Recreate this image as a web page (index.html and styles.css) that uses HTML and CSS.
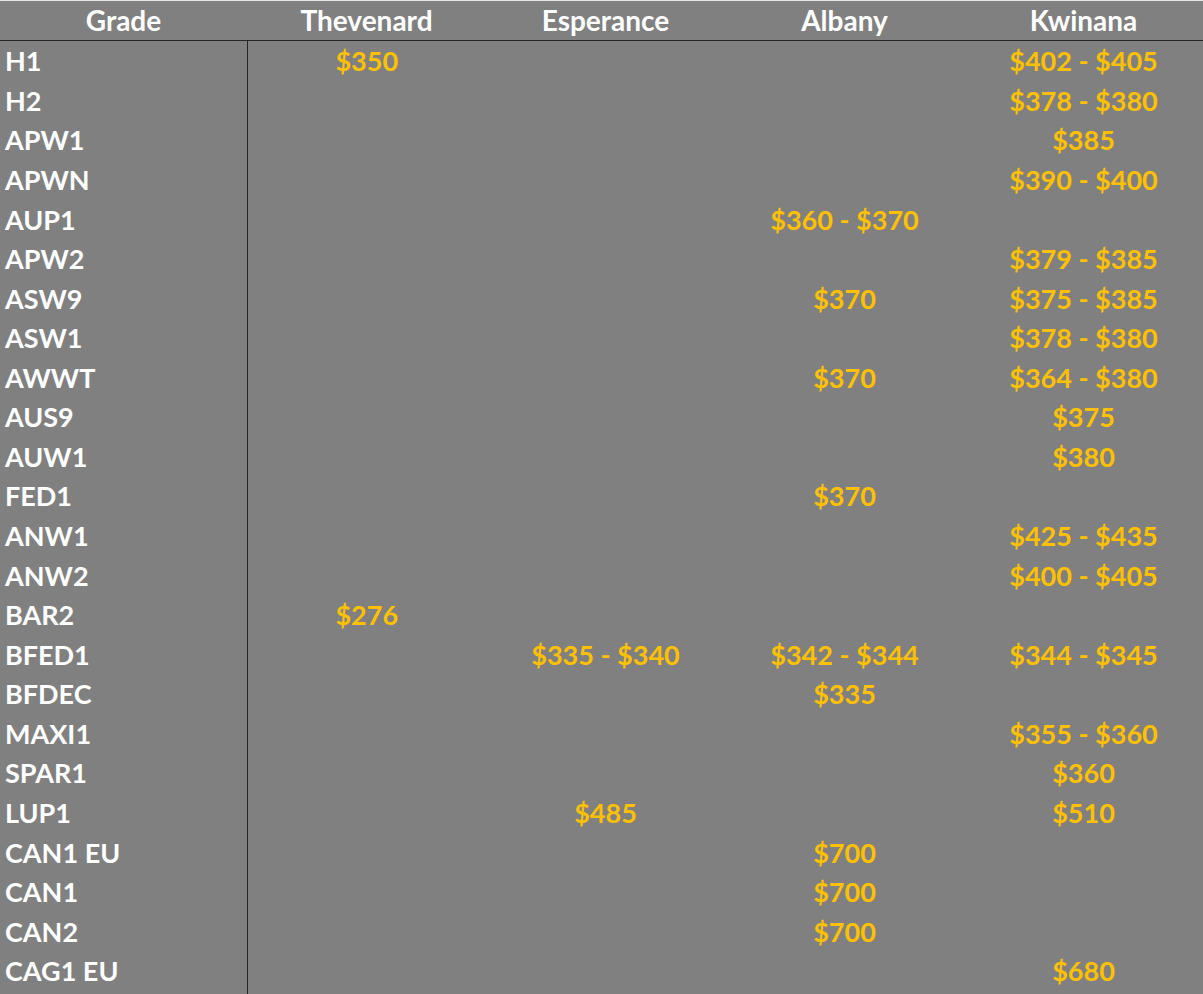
FILE: index.html
```html
<!DOCTYPE html>
<html>
<head>
<meta charset="utf-8">
<link rel="stylesheet" href="styles.css">
</head>
<body>
<table class="grid">
<colgroup>
<col class="c-grade"><col class="c-port"><col class="c-port"><col class="c-port"><col class="c-port">
</colgroup>
<thead>
<tr><th>Grade</th><th>Thevenard</th><th>Esperance</th><th>Albany</th><th>Kwinana</th></tr>
</thead>
<tbody>
<tr><td class="g">H1</td><td>$350</td><td></td><td></td><td>$402 - $405</td></tr>
<tr><td class="g">H2</td><td></td><td></td><td></td><td>$378 - $380</td></tr>
<tr><td class="g">APW1</td><td></td><td></td><td></td><td>$385</td></tr>
<tr><td class="g">APWN</td><td></td><td></td><td></td><td>$390 - $400</td></tr>
<tr><td class="g">AUP1</td><td></td><td></td><td>$360 - $370</td><td></td></tr>
<tr><td class="g">APW2</td><td></td><td></td><td></td><td>$379 - $385</td></tr>
<tr><td class="g">ASW9</td><td></td><td></td><td>$370</td><td>$375 - $385</td></tr>
<tr><td class="g">ASW1</td><td></td><td></td><td></td><td>$378 - $380</td></tr>
<tr><td class="g">AWWT</td><td></td><td></td><td>$370</td><td>$364 - $380</td></tr>
<tr><td class="g">AUS9</td><td></td><td></td><td></td><td>$375</td></tr>
<tr><td class="g">AUW1</td><td></td><td></td><td></td><td>$380</td></tr>
<tr><td class="g">FED1</td><td></td><td></td><td>$370</td><td></td></tr>
<tr><td class="g">ANW1</td><td></td><td></td><td></td><td>$425 - $435</td></tr>
<tr><td class="g">ANW2</td><td></td><td></td><td></td><td>$400 - $405</td></tr>
<tr><td class="g">BAR2</td><td>$276</td><td></td><td></td><td></td></tr>
<tr><td class="g">BFED1</td><td></td><td>$335 - $340</td><td>$342 - $344</td><td>$344 - $345</td></tr>
<tr><td class="g">BFDEC</td><td></td><td></td><td>$335</td><td></td></tr>
<tr><td class="g">MAXI1</td><td></td><td></td><td></td><td>$355 - $360</td></tr>
<tr><td class="g">SPAR1</td><td></td><td></td><td></td><td>$360</td></tr>
<tr><td class="g">LUP1</td><td></td><td>$485</td><td></td><td>$510</td></tr>
<tr><td class="g">CAN1 EU</td><td></td><td></td><td>$700</td><td></td></tr>
<tr><td class="g">CAN1</td><td></td><td></td><td>$700</td><td></td></tr>
<tr><td class="g">CAN2</td><td></td><td></td><td>$700</td><td></td></tr>
<tr><td class="g">CAG1 EU</td><td></td><td></td><td></td><td>$680</td></tr>
<tr class="filler"><td class="g"></td><td></td><td></td><td></td><td></td></tr>
</tbody>
</table>
</body>
</html>
```
FILE: styles.css
```css
html, body {
  margin: 0;
  padding: 0;
  background: #808080;
}
body {
  border-top: 1px solid #e6e6e6;
  height: 993px;
  overflow: hidden;
}
.grid {
  border-collapse: collapse;
  table-layout: fixed;
  width: 1203px;
  font-family: Lato, "Open Sans", sans-serif;
  font-weight: 700;
  font-size: 27px;
}
.c-grade { width: 247px; }
.c-port { width: 239px; }
.grid th {
  height: 39px;
  padding: 0;
  color: #ffffff;
  font-size: 28px;
  text-align: center;
  border-bottom: 1px solid #262626;
  line-height: 39px;
}
.grid td {
  height: 39.57px;
  padding: 0;
  text-align: center;
  color: #ffc000;
  line-height: 39px;
  white-space: nowrap;
}
.grid td.g {
  text-align: left;
  padding-left: 5px;
  color: #ffffff;
  border-right: 1px solid #262626;
}
.grid .filler td {
  height: 10px;
  line-height: 10px;
}
```
